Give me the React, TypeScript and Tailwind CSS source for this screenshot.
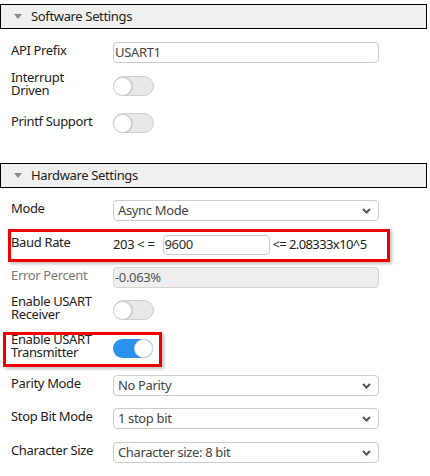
import React from "react";

interface SectionHeaderProps {
    title: string
    className?: string
}

const SectionHeader: React.FC<SectionHeaderProps> = ({title, className}) => {
    return (
        <div className={`flex items-center h-[25px] w-[427px] border border-black bg-[#f0f0f0] ${className ?? ""}`}>
            <svg width="8" height="5" viewBox="0 0 8 5" className="ml-[13px]">
                <polygon points="0,0 8,0 4,5" fill="#8a8a8a"/>
            </svg>
            <span className="ml-[9px] text-[#1f1f1f]">{title}</span>
        </div>
    )
}

interface RowProps {
    label: string
    className?: string
    labelClass?: string
    children: React.ReactNode
}

const Row: React.FC<RowProps> = ({label, className, labelClass, children}) => {
    return (
        <div className={`relative flex items-center pl-[11px] ${className ?? ""}`}>
            <div className={`w-[102px] shrink-0 pr-[12px] pb-[4px] leading-[13px] ${labelClass ?? "text-[#222]"}`}>{label}</div>
            {children}
        </div>
    )
}

const Toggle: React.FC<{ on?: boolean }> = ({on}) => {
    if (on) {
        return (
            <div className="flex items-center justify-end w-[40px] h-[19px] rounded-full bg-[#2b91ef]">
                <div className="w-[19px] h-[19px] rounded-full bg-white border border-[#d8d8d8]"/>
            </div>
        )
    }
    return (
        <div className="flex items-center w-[41px] h-[20px] rounded-full bg-[#e7e8ea] border border-[#cfcfcf]">
            <div className="w-[19px] h-[19px] -ml-px rounded-full bg-white border border-[#d0d0d0] shadow-[1px_0_1px_rgba(0,0,0,0.12)]"/>
        </div>
    )
}

const Select: React.FC<{ value: string }> = ({value}) => {
    return (
        <div className="flex items-center justify-between w-[266px] h-[21px] rounded-[4px] border border-[#cccccc] bg-white pl-[4px] pr-[7px]">
            <span className="text-[#444]">{value}</span>
            <svg width="9" height="6" viewBox="0 0 9 6">
                <polyline points="1,1 4.5,4.5 8,1" fill="none" stroke="#555" strokeWidth="2"/>
            </svg>
        </div>
    )
}

export default function App() {
    return (
        <div className="w-[430px] h-[476px] bg-white pt-[4px] font-['Noto_Sans',sans-serif] text-[13px] tracking-[-0.35px] overflow-hidden">
            <SectionHeader title="Software Settings"/>

            <Row label="API Prefix" className="mt-[13px] h-[21px]">
                <div className="flex items-center w-[266px] h-[21px] rounded-[4px] border border-[#cccccc] pl-[1px] text-[#444]">
                    USART1
                </div>
            </Row>
            <Row label={"Interrupt Driven"} className="mt-[9px] h-[28px]">
                <Toggle/>
            </Row>
            <Row label="Printf Support" className="mt-[13px] h-[20px]">
                <Toggle/>
            </Row>

            <SectionHeader title="Hardware Settings" className="mt-[30px]"/>

            <Row label="Mode" className="mt-[12px] h-[21px]">
                <Select value="Async Mode"/>
            </Row>
            <Row label="Baud Rate" className="mt-[13px] h-[21px]">
                <div className="absolute left-[8px] top-[-5px] w-[382px] h-[33px] border-[3px] border-[#ee0000] shadow-[2px_2px_3px_rgba(0,0,0,0.25)] pointer-events-none"/>
                <span className="text-[#222]">203 &lt; =</span>
                <div className="flex items-center ml-[8px] w-[107px] h-[20px] rounded-[4px] border border-[#cccccc] pl-[1px] text-[#333]">
                    9600
                </div>
                <span className="ml-[3px] text-[#222] tracking-[-0.6px]">&lt;= 2.08333x10^5</span>
            </Row>
            <Row label="Error Percent" className="mt-[12px] h-[21px]" labelClass="text-[#7a7a7a]">
                <div className="flex items-center w-[266px] h-[21px] rounded-[4px] border border-[#d4d4d4] bg-[#eeeeee] pl-[1px] text-[#555]">
                    -0.063%
                </div>
            </Row>
            <Row label="Enable USART Receiver" className="mt-[8px] h-[28px]">
                <Toggle/>
            </Row>
            <Row label="Enable USART Transmitter" className="mt-[10px] h-[28px]">
                <div className="absolute left-[3px] top-[-2px] w-[159px] h-[35px] border-[3px] border-[#ee0000] shadow-[2px_2px_3px_rgba(0,0,0,0.25)] pointer-events-none"/>
                <Toggle on/>
            </Row>
            <Row label="Parity Mode" className="mt-[13px] h-[21px]">
                <Select value="No Parity"/>
            </Row>
            <Row label="Stop Bit Mode" className="mt-[12px] h-[21px]">
                <Select value="1 stop bit"/>
            </Row>
            <Row label="Character Size" className="mt-[13px] h-[21px]">
                <Select value="Character size: 8 bit"/>
            </Row>
        </div>
    )
}
